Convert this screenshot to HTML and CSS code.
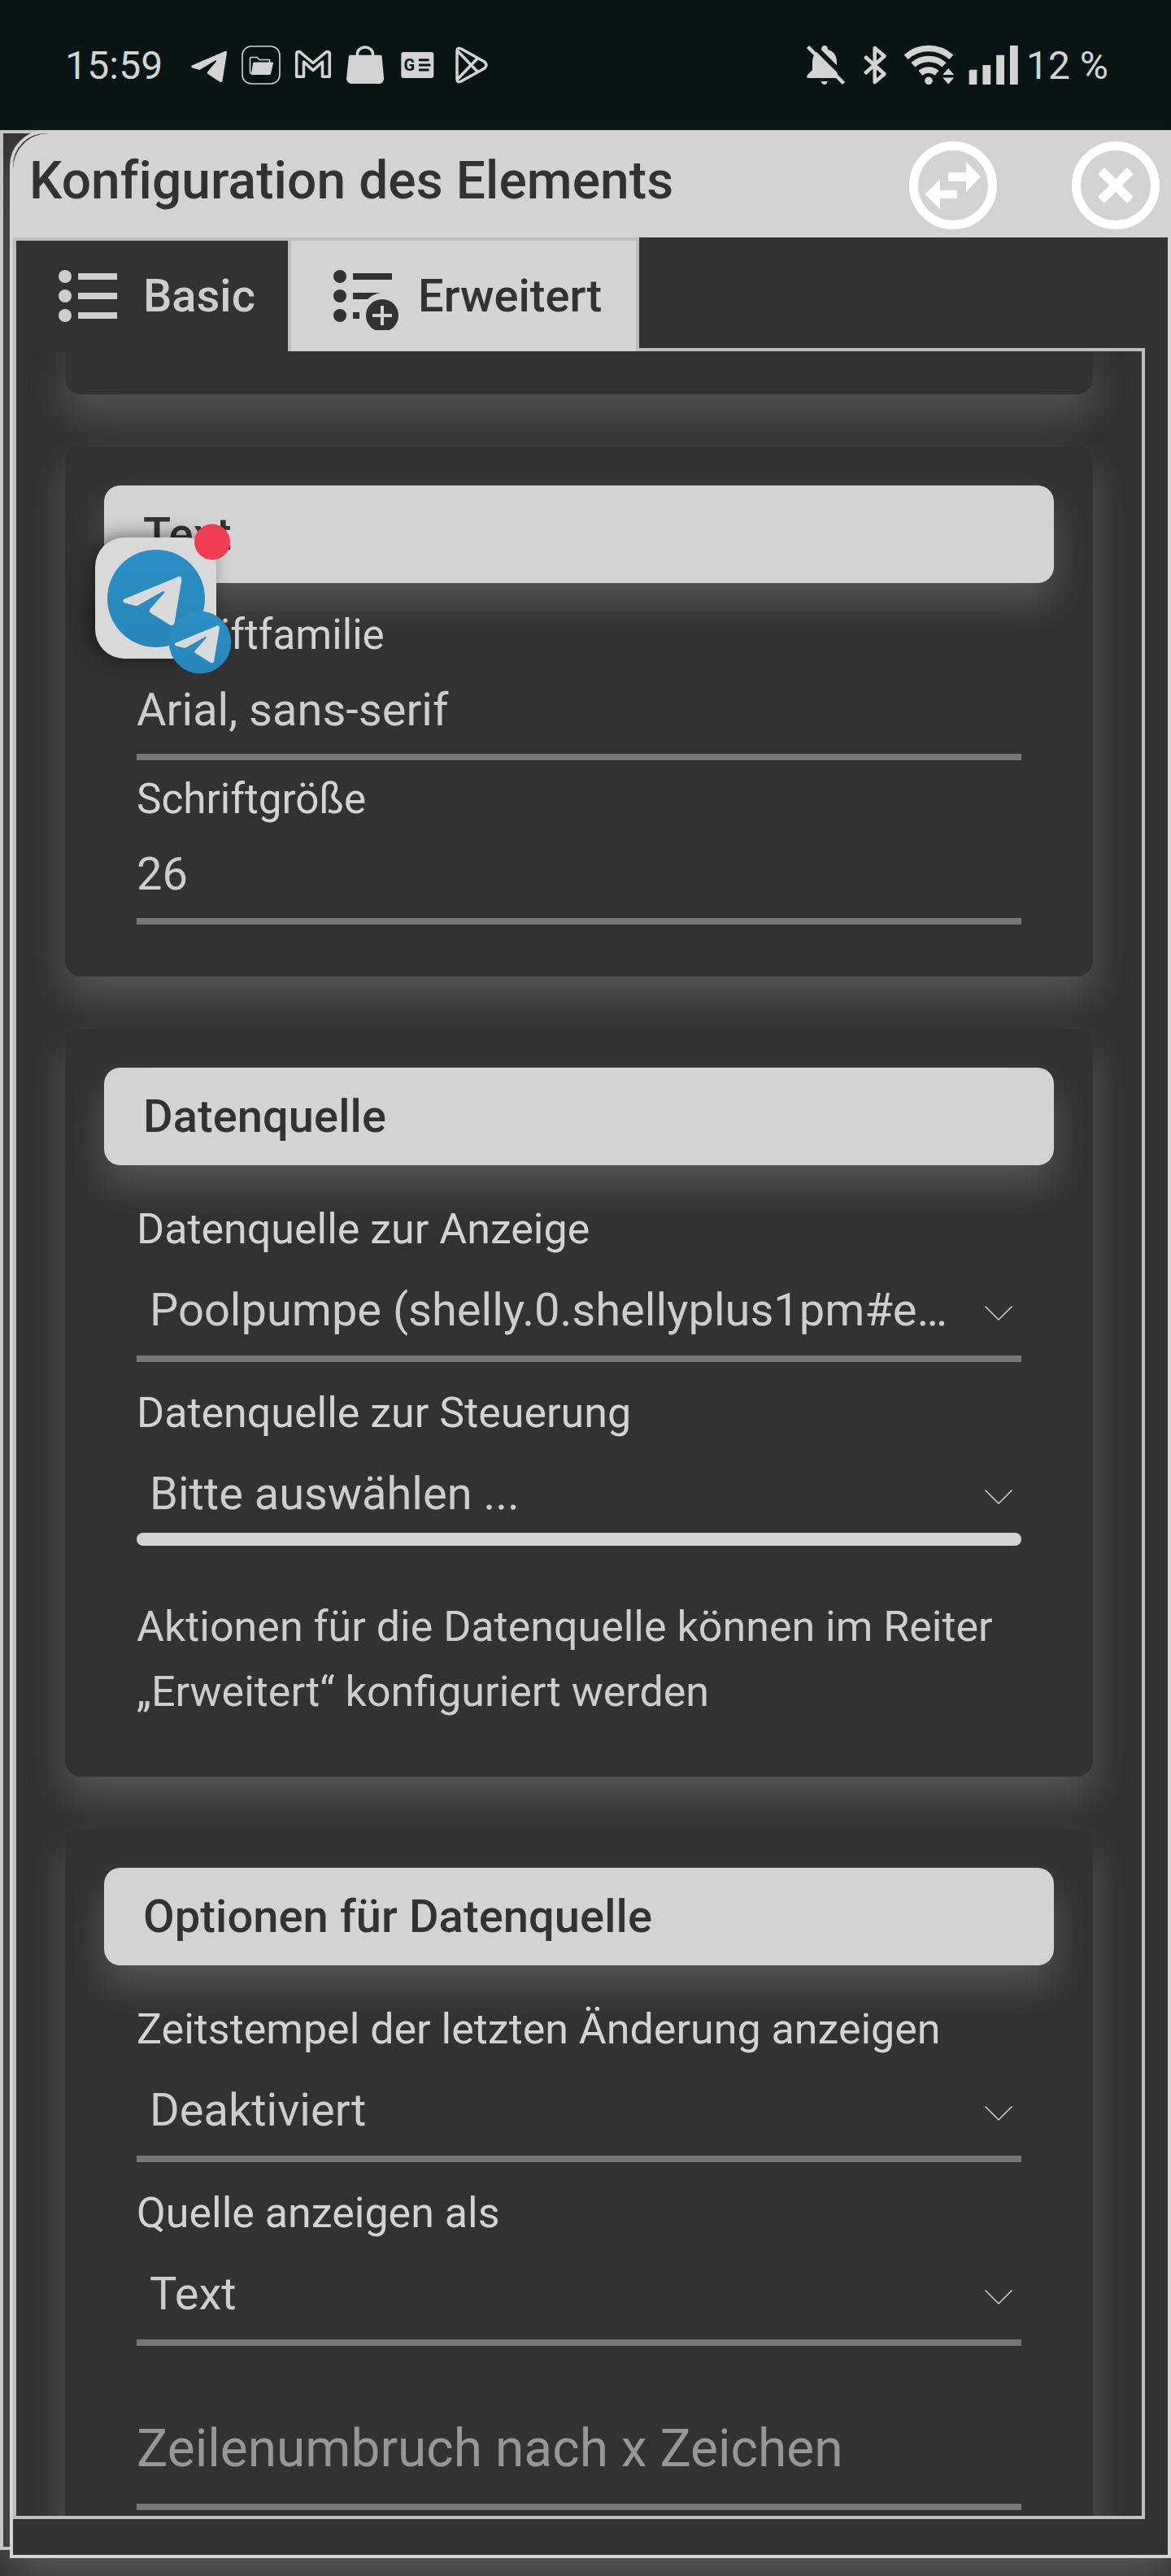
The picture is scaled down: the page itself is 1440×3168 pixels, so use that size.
FILE: index.html
```
<!DOCTYPE html>
<html lang="de">
<head>
    <meta charset="UTF-8">
    <meta name="viewport" content="width=device-width, initial-scale=1.0">
    <title>Konfiguration des Elements</title>
    <link rel="stylesheet" href="styles.css">
</head>
<body>
    <header class="statusbar">
        <span class="clock">15:59</span>
        <svg class="status-left" viewBox="230 40 380 80">
            <symbol id="plane" viewBox="235 62.5 44 38.7" preserveAspectRatio="none">
                <path d="M236 80.500L276.500 63Q279 62 279 65L273.500 99.500Q272.500 102 270 100.500L255.500 91Q254 89.500 255.500 88L266 75.500Q266.500 73.500 264.500 74.500L247 85Q245.500 86 244 85.500L236.500 83.500Q234 82 236 80.500z"/>
            </symbol>
            <use href="#plane" x="235" y="62.5" width="44" height="38.7"/>
            <!-- files -->
            <rect class="line thin" x="298" y="57" width="46" height="46" rx="11"/>
            <path class="line thin" d="M309 91l-1.500-2V72q0-1.500 1.500-1.500h7l3 3h12.500v4"/>
            <path d="M312.500 76.500h22.500q1.500 0 1 1.500l-3 12.500q-.5 1.500-2 1.500h-21q-1.500 0-1-1.500l2-12.500q.3-1.500 1.500-1.500z"/>
            <!-- mail -->
            <path class="line" d="M364.700 94.300V66q0-2.300 2.500-2.300h1.300L385 77.500l16.500-13.800h1.300q2.500 0 2.500 2.300v28.300h-8.800V76L385 86.500 373.500 76v18.300z"/>
            <!-- store -->
            <path d="M430.500 67.700h37.500q1.500 0 1.600 1.500l2.600 28q-1.500 5.800-6 5.800h-33.500q-5.200 0-6.700-5.800l2.900-28q.1-1.500 1.600-1.500z"/>
            <path class="line" d="M439.500 70v-3.500a9.500 8.500 0 0 1 19 0V70"/>
            <!-- news -->
            <rect x="493.3" y="64" width="40" height="32" rx="3"/>
            <text class="news-g" x="496.500" y="87.300">G</text>
            <path class="news-lines" d="M515 73.700h12.500M515 79.900h14.500M515 86h12.500"/>
            <!-- play -->
            <path class="line" d="M562 62.500v35q0 4.500 5 2.500l28-15.500q6-4.500 0-9L567 60q-5-2-5 2.500zM563 63l25 26M563 97l25-26"/>
        </svg>
        <svg class="status-right" viewBox="980 40 276 80">
            <!-- muted bell -->
            <path d="M1014 56q3.500 0 4 5 11 3 11 16v10l2 9h-38q-1.500-1.500 0-4l6-6v-9q0-13 11-16 .5-5 4-5z"/>
            <path d="M1010 100h7.500q-.5 4-3.700 4t-3.800-4z"/>
            <path class="slash-gap" d="M994.500 50l46 46"/>
            <path class="slash" d="M993.500 57.500l44 45"/>
            <!-- bluetooth -->
            <path class="line wide" d="M1063.500 69.500L1087.500 91l-11.800 10V59l11.800 10-24 21.500"/>
            <!-- wifi -->
            <path class="wifi" d="M1114.200 70.200a41.500 41.500 0 0 1 55.600 0M1122.900 79.800a28.500 28.500 0 0 1 38.200 0M1132 89.900a15 15 0 0 1 20 0"/>
            <circle cx="1142" cy="99.300" r="4.800"/>
            <path d="M1166.200 84l7 8h-14zM1166.200 103.500l7-8h-14z"/>
            <!-- signal -->
            <path d="M1193 85.700h8.300V104h-9.600V87zM1208.400 80h9.800v24h-9.800zM1225.200 67.700h9.800V104h-9.800zM1242 56h9.700v48H1242z"/>
        </svg>
        <span class="battery">12 %</span>
    </header>

    <main class="screen">
        <div class="backdrop"></div>
        <section class="dialog">
            <div class="dialog-header">
                <h1>Konfiguration des Elements</h1>
                <svg class="round-btn" viewBox="0 0 108 108">
                    <circle cx="54" cy="54" r="48.500"/>
                    <path d="M48 38h22V25l18 18.500-18 18.500V49H48zM59 60v10H38v13L19.500 65 38 46.500V60z"/>
                </svg>
                <svg class="round-btn" viewBox="0 0 108 108">
                    <circle cx="54" cy="54" r="48.500"/>
                    <path class="cross" d="M36 36l36 36M72 36L36 72"/>
                </svg>
            </div>

            <nav class="tabs">
                <div class="tab active">
                    <svg class="tab-icon" viewBox="0 0 84 84">
                        <circle cx="8" cy="18" r="8"/><circle cx="8" cy="42" r="8"/><circle cx="8" cy="66" r="8"/>
                        <path d="M24 14h48v8H24zM24 38h48v8H24zM24 62h48v8H24z"/>
                    </svg>
                    <span>Basic</span>
                </div>
                <div class="tab">
                    <svg class="tab-icon" viewBox="0 0 84 84">
                        <circle cx="8" cy="18" r="8"/><circle cx="8" cy="42" r="8"/><circle cx="8" cy="66" r="8"/>
                        <path d="M24 14h48v8H24zM24 38h34q-10 2-16 8H24zM24 62h8v8h-8z"/>
                        <circle cx="60" cy="66" r="20"/>
                        <path class="plus" d="M60 54v24M48 66h24"/>
                    </svg>
                    <span>Erweitert</span>
                </div>
            </nav>

            <div class="panel">
                <div class="card card-cut"></div>

                <div class="card card-text">
                    <h2>Text</h2>
                    <div class="field">
                        <label>Schriftfamilie</label>
                        <div class="value">Arial, sans-serif</div>
                    </div>
                    <div class="field">
                        <label>Schriftgröße</label>
                        <div class="value">26</div>
                    </div>
                </div>

                <div class="card card-source">
                    <h2>Datenquelle</h2>
                    <div class="field select">
                        <label>Datenquelle zur Anzeige</label>
                        <div class="value"><span>Poolpumpe (shelly.0.shellyplus1pm#e…</span><svg class="chevron" viewBox="0 0 36 20"><path d="M1.500 1.500L18 18 34.500 1.500"/></svg></div>
                    </div>
                    <div class="field select focus">
                        <label>Datenquelle zur Steuerung</label>
                        <div class="value"><span>Bitte auswählen ...</span><svg class="chevron" viewBox="0 0 36 20"><path d="M1.500 1.500L18 18 34.500 1.500"/></svg></div>
                    </div>
                    <p>Aktionen für die Datenquelle können im Reiter „Erweitert“ konfiguriert werden</p>
                </div>

                <div class="card card-options">
                    <h2>Optionen für Datenquelle</h2>
                    <div class="field select">
                        <label>Zeitstempel der letzten Änderung anzeigen</label>
                        <div class="value"><span>Deaktiviert</span><svg class="chevron" viewBox="0 0 36 20"><path d="M1.500 1.500L18 18 34.500 1.500"/></svg></div>
                    </div>
                    <div class="field select">
                        <label>Quelle anzeigen als</label>
                        <div class="value"><span>Text</span><svg class="chevron" viewBox="0 0 36 20"><path d="M1.500 1.500L18 18 34.500 1.500"/></svg></div>
                    </div>
                    <div class="placeholder">Zeilenumbruch nach x Zeichen</div>
                </div>
            </div>
        </section>

        <!-- floating chat bubble -->
        <div class="bubble">
            <svg class="bubble-icon" viewBox="0 0 170 190">
                <defs>
                    <linearGradient id="blue" x1="0" y1="0" x2="0" y2="1">
                        <stop offset="0" stop-color="#2b90c6"/>
                        <stop offset="1" stop-color="#2786b8"/>
                    </linearGradient>
                </defs>
                <circle cx="75" cy="95" r="60" fill="url(#blue)"/>
                <use href="#plane" x="34" y="67.500" width="72.500" height="61"/>
                <circle cx="129" cy="149" r="38.300" fill="url(#blue)"/>
                <use href="#plane" x="97.500" y="128" width="55.500" height="46.500"/>
                <circle cx="144" cy="25.500" r="22" fill="#f03d52"/>
            </svg>
        </div>
    </main>
</body>
</html>
```

FILE: styles.css
```
* {
    box-sizing: border-box;
}
body {
    margin: 0;
    width: 1440px;
    height: 3168px;
    overflow: hidden;
    background: #323232;
    color: #d3d3d3;
    font-family: Roboto, sans-serif;
}
svg {
    display: block;
    flex: none;
}

/* status bar */
.statusbar {
    display: flex;
    align-items: center;
    height: 160px;
    padding: 0 76px 0 80px;
    background: #091515;
    font-size: 48px;
}
.clock {
    width: 150px;
    letter-spacing: 0.2px;
}
.status-left, .status-right {
    height: 80px;
    fill: #d3d3d3;
}
.status-left {
    width: 380px;
}
.status-right {
    width: 276px;
    margin-left: auto;
}
.line {
    fill: none;
    stroke: #d3d3d3;
    stroke-width: 3.5;
    stroke-linejoin: round;
}
.thin {
    stroke-width: 1.6;
}
.wide {
    stroke-width: 4.5;
}
.news-g {
    fill: #091515;
    font-size: 20px;
    font-weight: 700;
}
.news-lines {
    stroke: #091515;
    stroke-width: 3;
}
.slash {
    stroke: #d3d3d3;
    stroke-width: 4.5;
}
.slash-gap {
    stroke: #091515;
    stroke-width: 6;
}
.wifi {
    fill: none;
    stroke: #d3d3d3;
    stroke-width: 7.5;
}
.battery {
    width: 102px;
    margin-left: 6px;
    white-space: nowrap;
}

/* dialog */
.screen {
    position: relative;
    height: 3008px;
    padding-left: 12px;
}
/* page element that sits behind the dialog */
.backdrop {
    position: absolute;
    top: 0;
    left: 0;
    width: 1440px;
    height: 2976px;
    border: 4px solid #c4c4c4;
}
.dialog {
    position: relative;
    height: 2986px;
    border: 4px solid #d3d3d3;
    border-top-left-radius: 44px;
    background: #323232;
    box-shadow: 0 24px 48px rgba(211, 211, 211, 0.23);
}
.dialog-header {
    display: flex;
    align-items: center;
    height: 128px;
    padding: 0 10px 0 20px;
    border-top-left-radius: 44px;
    background: #d3d3d3;
}
h1 {
    margin: -10px auto 0 0;
    color: #323232;
    font-size: 64px;
    font-weight: 500;
    line-height: 76px;
    letter-spacing: 0.1px;
}
.round-btn {
    width: 108px;
    height: 108px;
    margin-left: 92px;
    fill: #fff;
}
.round-btn circle, .cross {
    fill: none;
    stroke: #fff;
    stroke-width: 11;
}

/* tabs */
.tabs {
    position: relative;
    z-index: 1;
    display: flex;
    width: 770px;
    height: 140px;
    border: 4px solid #bebebe;
    border-bottom: none;
}
.tab {
    display: flex;
    align-items: center;
    width: 424px;
    padding: 0 0 0 52px;
    background: #d3d3d3;
    color: #323232;
    fill: #323232;
    font-size: 56px;
    font-weight: 500;
}
.tab.active {
    width: 338px;
    border-right: 4px solid #bebebe;
    background: #323232;
    color: #cdcdcd;
    fill: #cdcdcd;
}
.tab-icon {
    width: 84px;
    height: 84px;
    margin-right: 20px;
}
.plus {
    stroke: #d3d3d3;
    stroke-width: 4;
}
.panel {
    width: 1392px;
    height: 2670px;
    margin-top: -4px;
    padding: 0 60px;
    border: 4px solid #bebebe;
    overflow: hidden;
}

/* cards */
.card {
    margin-bottom: 64px;
    padding: 48px;
    border-radius: 20px;
    background: #323232;
    box-shadow: 0 24px 48px rgba(211, 211, 211, 0.23);
}
.card-cut {
    height: 53px;
    padding: 0;
    border-radius: 0 0 20px 20px;
    box-shadow: 0 24px 48px rgba(211, 211, 211, 0.23), 0 -60px 48px rgba(211, 211, 211, 0.23);
}
.card-text {
    height: 652px;
}
.card-source {
    height: 920px;
}
.card-options {
    height: 920px;
}
h2 {
    height: 120px;
    margin: 0 0 16px;
    padding-left: 48px;
    border-radius: 20px;
    background: #d3d3d3;
    box-shadow: 0 24px 48px rgba(211, 211, 211, 0.23);
    color: #323232;
    font-size: 56px;
    font-weight: 500;
    line-height: 120px;
    letter-spacing: 0.1px;
}
.card-text h2 {
    margin-bottom: 18px;
}
.field {
    position: relative;
    height: 202px;
    margin: 0 40px;
    font-size: 56px;
}
label {
    display: block;
    font-size: 51.2px;
    line-height: 91px;
    height: 92px;
}
.value {
    display: flex;
    align-items: center;
    height: 108px;
    padding-bottom: 8px;
    border-bottom: 8px solid #777;
    color: #cdcdcd;
}
.select {
    height: 226px;
}
.select label {
    height: 118px;
    padding-top: 8px;
    font-size: 52px;
    line-height: 110px;
}
.select .value {
    padding: 0 10px 13px 16px;
}
.select .value span {
    white-space: nowrap;
}
.focus .value {
    height: 92px;
    padding-bottom: 5px;
    border: none;
}
.focus::after {
    content: "";
    display: block;
    height: 16px;
    border-radius: 8px;
    background: #d3d3d3;
}
.chevron {
    width: 36px;
    height: 20px;
    margin: 8px 0 0 auto;
    fill: none;
    stroke: #d3d3d3;
    stroke-width: 1.5;
}
.card p {
    margin: 60px 40px 0;
    color: #cdcdcd;
    font-size: 52px;
    line-height: 80px;
}
.placeholder {
    height: 202px;
    margin: 0 40px;
    border-bottom: 8px solid #777;
    color: #979797;
    font-size: 64px;
    line-height: 254px;
}

/* chat bubble */
.bubble {
    position: absolute;
    top: 501px;
    left: 117px;
    width: 149px;
    height: 149px;
    border-radius: 36px;
    background: #d9d9d9;
    box-shadow: -6px -2px 22px rgba(0, 0, 0, 0.5);
}
.bubble-icon {
    position: absolute;
    top: -20px;
    left: 0;
    width: 170px;
    height: 190px;
    fill: #d9d9d9;
}
```
